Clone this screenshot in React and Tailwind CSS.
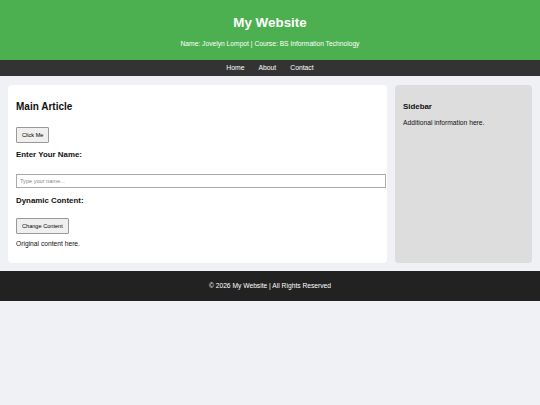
export default function App() {
  return (
    <div className="min-h-screen bg-[#f0f1f5] font-['Liberation_Sans',Arial,sans-serif] text-[#111]">
      <header className="flex h-[60px] flex-col items-center bg-[#4caf50] pt-[15px] text-white">
        <h1 className="text-[13.4px] font-bold leading-[15px]">My Website</h1>
        <p className="mt-[10px] text-[6.7px] leading-[8px]">
          Name: Jovelyn Lompot | Course: BS Information Technology
        </p>
      </header>

      <nav className="flex h-[16px] items-center justify-center gap-[14px] bg-[#333] text-[6.8px] text-white">
        <a href="#">Home</a>
        <a href="#">About</a>
        <a href="#">Contact</a>
      </nav>

      <div className="flex gap-[8px] px-[8px] pt-[9px]">
        <main className="flex-1 rounded-[4px] bg-white px-[8px] pt-[16px] pb-[15px]">
          <h2 className="text-[10px] font-bold leading-[12px]">Main Article</h2>
          <button className="mt-[14px] block h-[16px] rounded-[1px] border border-[#999] bg-[#efefef] px-[5px] text-[5.6px] leading-[6px] text-black">
            Click Me
          </button>
          <h3 className="mt-[7px] text-[7.9px] font-bold leading-[9px]">Enter Your Name:</h3>
          <input
            type="text"
            placeholder="Type your name..."
            className="mt-[15px] block h-[14px] w-[calc(100%+7px)] border border-[#aaa] bg-white px-[3px] text-[5.6px] outline-none placeholder:text-[#888]"
          />
          <h3 className="mt-[8px] text-[7.9px] font-bold leading-[9px]">Dynamic Content:</h3>
          <button className="mt-[13px] block h-[16px] rounded-[1px] border border-[#999] bg-[#efefef] px-[5px] text-[5.6px] leading-[6px] text-black">
            Change Content
          </button>
          <p className="mt-[6px] text-[6.7px] leading-[8px]">Original content here.</p>
        </main>

        <aside className="w-[137px] rounded-[4px] bg-[#ddd] px-[8px] pt-[16.5px]">
          <h3 className="text-[7.9px] font-bold leading-[9px]">Sidebar</h3>
          <p className="mt-[8px] text-[6.7px] leading-[8px]">Additional information here.</p>
        </aside>
      </div>

      <footer className="mt-[8px] flex h-[30px] items-center justify-center bg-[#222] text-[6.7px] text-white">
        © 2026 My Website | All Rights Reserved
      </footer>
    </div>
  );
}
